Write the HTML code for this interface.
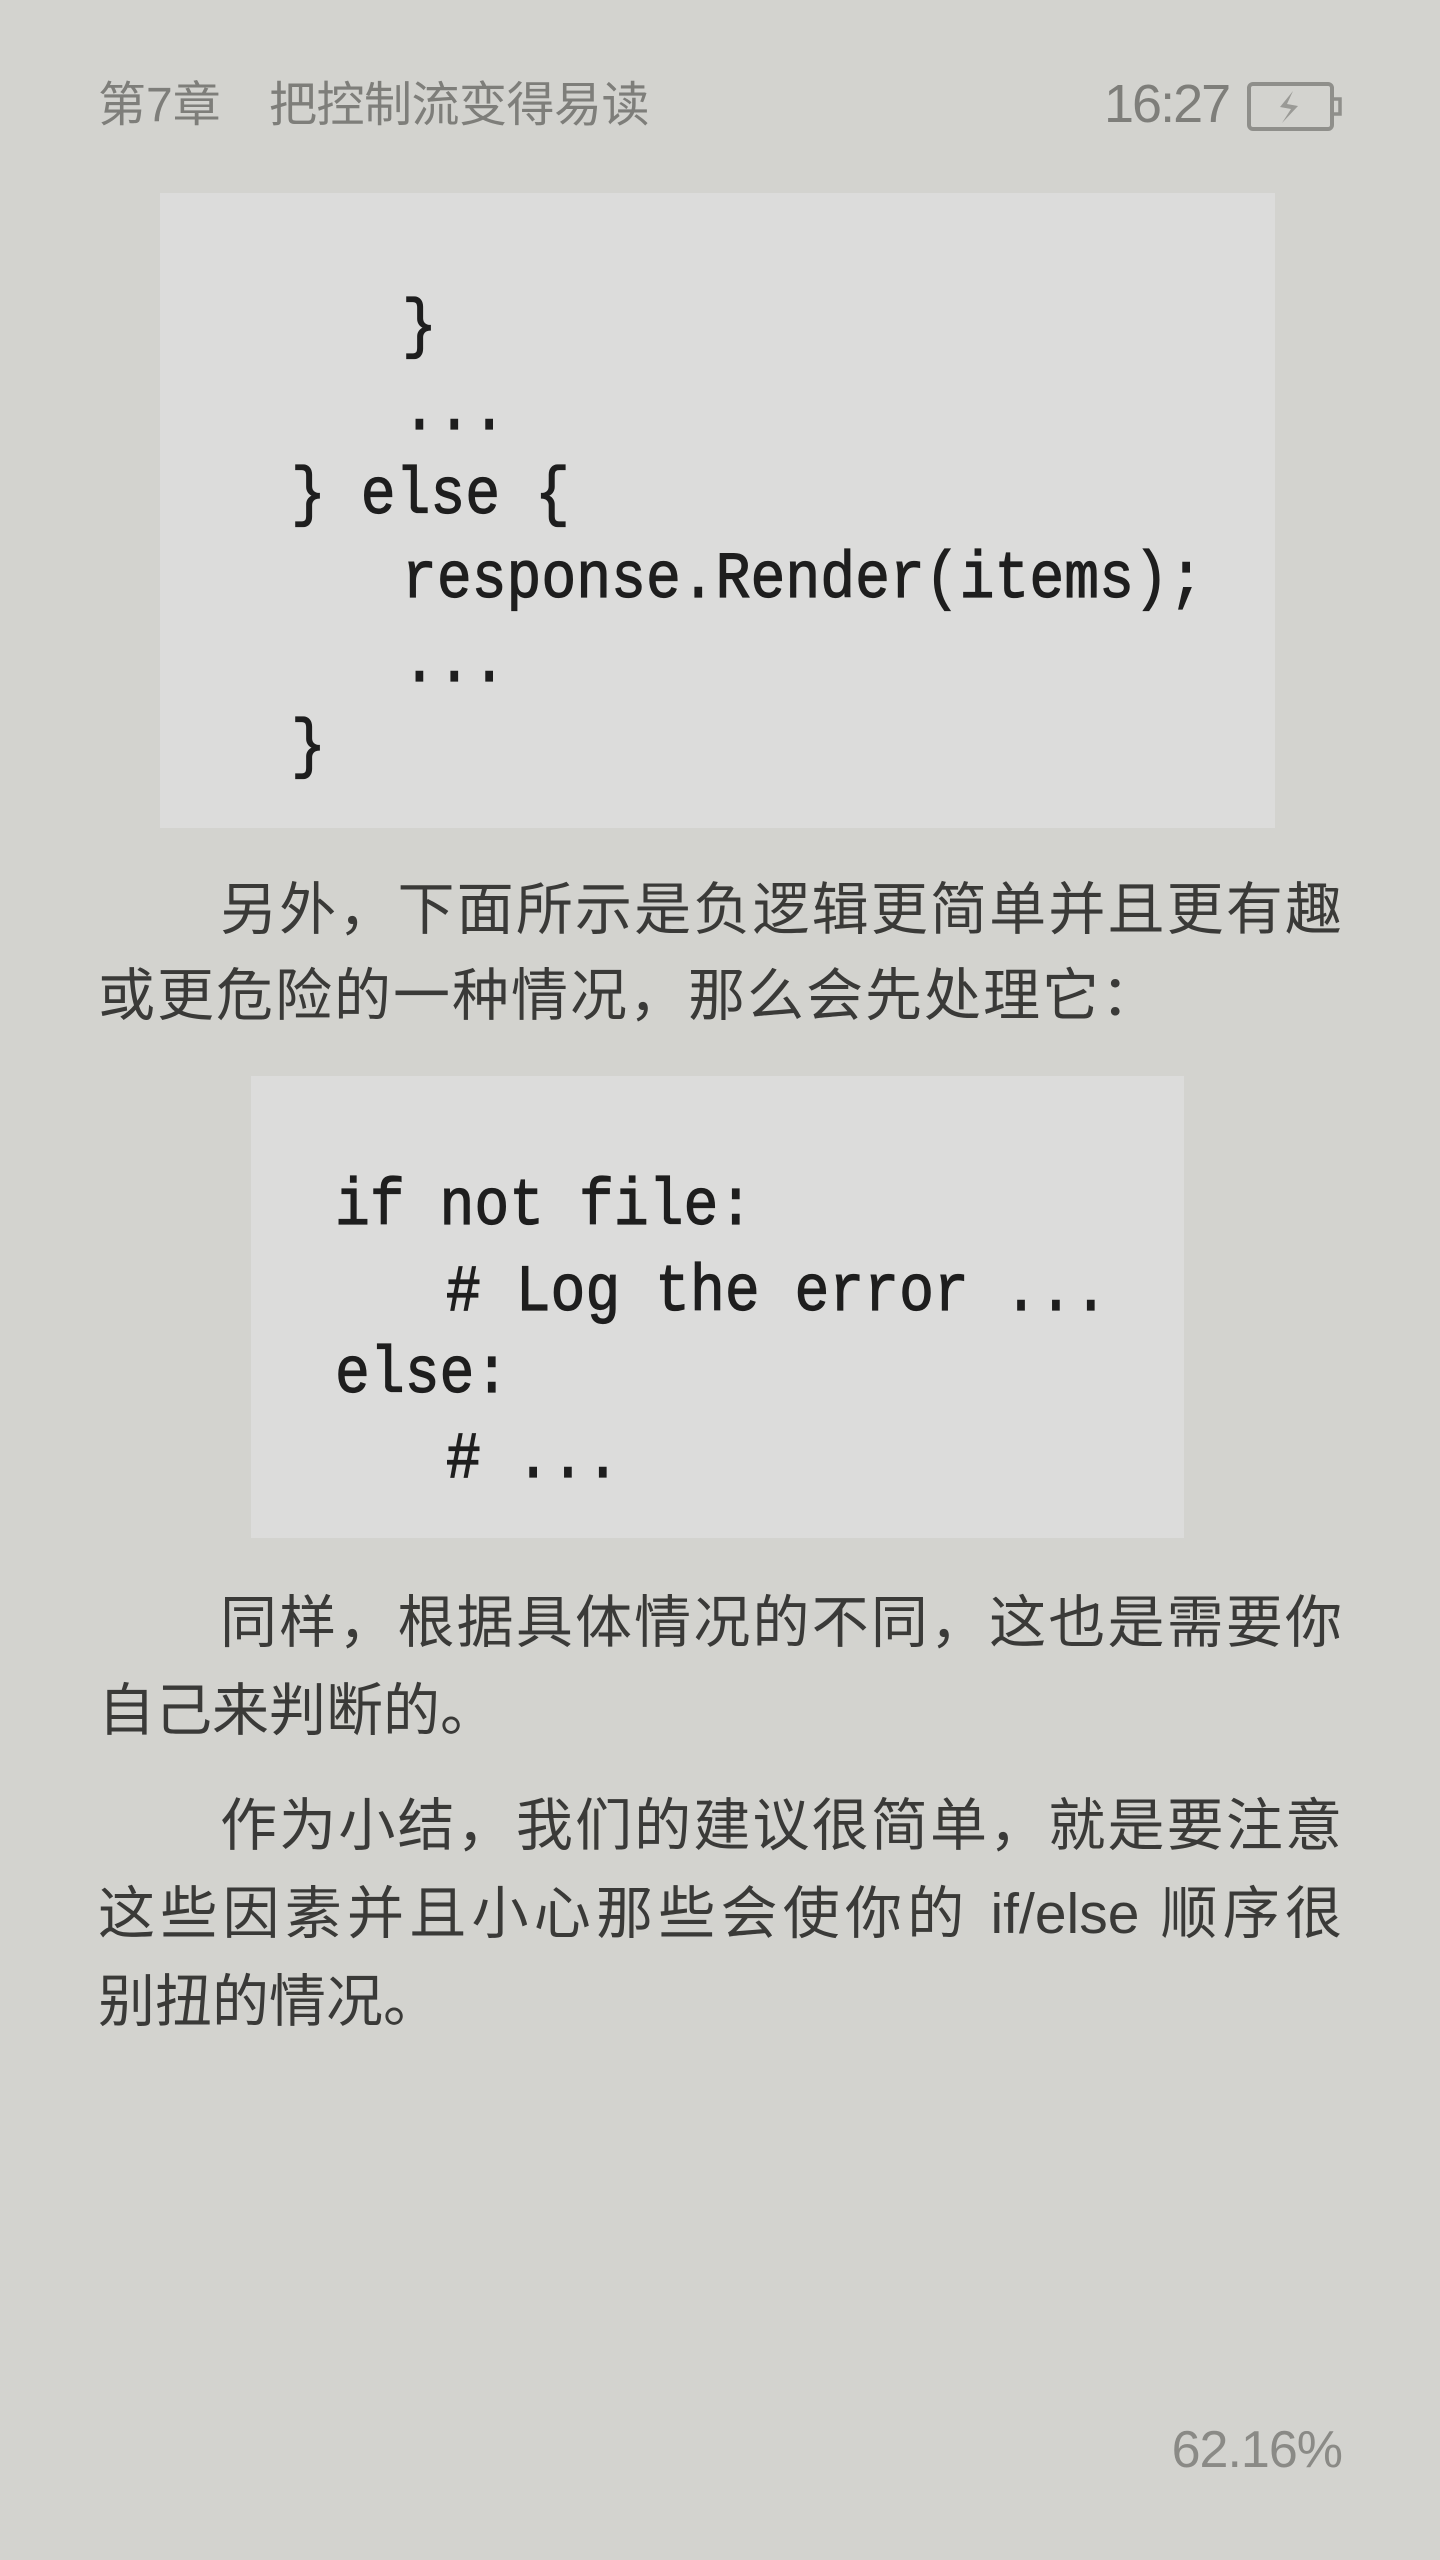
<!DOCTYPE html>
<html><head><meta charset="utf-8"><style>
html,body{margin:0;padding:0;}
body{width:1440px;height:2560px;background:#d3d3cf;position:relative;overflow:hidden;font-family:"Liberation Sans","Noto Sans CJK SC",sans-serif;}
.hdr{position:absolute;color:#7e7e7a;font-size:48px;line-height:60px;top:76px;white-space:pre;}
.code{position:absolute;background:#dcdcdb;}
.cl{position:absolute;font-family:"Liberation Mono",monospace;font-size:66px;line-height:66px;color:#1e1e1e;-webkit-text-stroke:1.2px #1e1e1e;white-space:pre;transform:scaleX(0.88);transform-origin:0 0;margin-top:-2px;}
.p{position:absolute;left:98px;width:1244px;font-size:57px;line-height:87px;height:87px;color:#3a3a38;white-space:nowrap;}
.j{text-align:justify;text-align-last:justify;}
</style></head><body>
<div class="hdr" style="left:98px">第7章</div>
<div class="hdr" style="left:269px;letter-spacing:-0.5px">把控制流变得易读</div>
<div class="hdr" style="left:1104px;font-size:54px;letter-spacing:-2px;top:74px">16:27</div>
<svg style="position:absolute;left:1246px;top:81px" width="100" height="52" viewBox="0 0 100 52">
<rect x="3" y="3" width="83" height="45" rx="4" fill="none" stroke="#8f8f8b" stroke-width="4"/>
<rect x="86" y="18" width="8" height="15" fill="none" stroke="#8f8f8b" stroke-width="3.5"/>
<path d="M47 10 L34 26 L45 28 L36 42 L52 25 L41 23 Z" fill="#9a9a96"/>
</svg>

<div class="code" style="left:160px;top:193px;width:1115px;height:635px"></div>
<div class="cl" style="left:402px;top:297px">}</div>
<div class="cl" style="left:402px;top:381px">...</div>
<div class="cl" style="left:291px;top:465px">} else {</div>
<div class="cl" style="left:402px;top:549px">response.Render(items);</div>
<div class="cl" style="left:402px;top:633px">...</div>
<div class="cl" style="left:291px;top:717px">}</div>

<div class="p j" style="top:867px;padding-left:122px;width:1122px">另外，下面所示是负逻辑更简单并且更有趣</div>
<div class="p" style="top:953px;letter-spacing:2px">或更危险的一种情况，那么会先处理它：</div>

<div class="code" style="left:251px;top:1076px;width:933px;height:462px"></div>
<div class="cl" style="left:335px;top:1176px">if not file:</div>
<div class="cl" style="left:446px;top:1262px"># Log the error ...</div>
<div class="cl" style="left:335px;top:1344px">else:</div>
<div class="cl" style="left:446px;top:1429px"># ...</div>

<div class="p j" style="top:1580px;padding-left:122px;width:1122px">同样，根据具体情况的不同，这也是需要你</div>
<div class="p" style="top:1668px">自己来判断的。</div>

<div class="p j" style="top:1783px;padding-left:122px;width:1122px">作为小结，我们的建议很简单，就是要注意</div>
<div class="p j" style="top:1871px">这些因素并且小心那些会使你的 if/else 顺序很</div>
<div class="p" style="top:1959px">别扭的情况。</div>

<div style="position:absolute;right:98px;top:2420px;font-size:52px;line-height:60px;color:#8a8a86;letter-spacing:-1px">62.16%</div>
</body></html>
